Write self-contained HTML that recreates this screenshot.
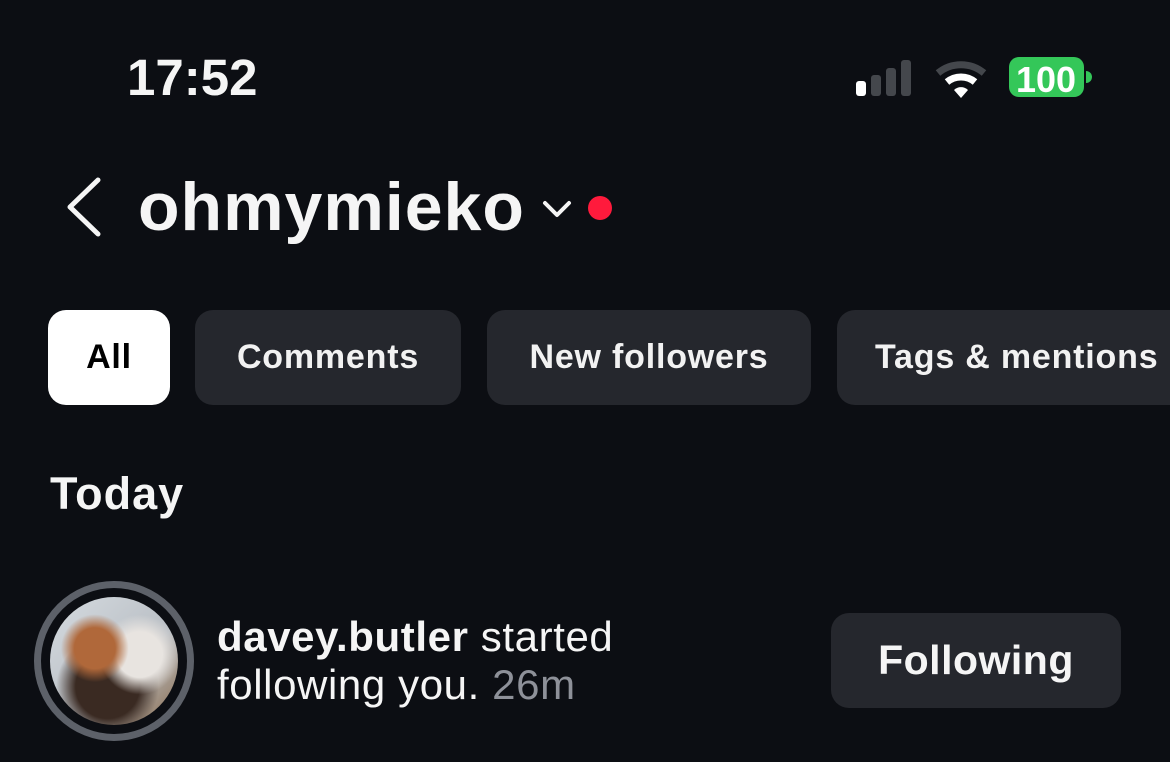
<!DOCTYPE html>
<html><head><style>
body{margin:0;width:1170px;height:762px;background:#0c0e13;font-family:"Liberation Sans",sans-serif;color:#f5f5f5;position:relative;overflow:hidden}
.a{position:absolute}
.chip{position:absolute;top:310px;height:95px;border-radius:18px;background:#25272d;font-size:34px;letter-spacing:0.8px;font-weight:bold;display:flex;align-items:center;justify-content:center;white-space:nowrap;color:#f2f2f2}
</style></head><body>
<div class="a" style="left:127px;top:48px;font-size:51px;font-weight:bold">17:52</div>
<svg class="a" style="left:850px;top:55px" width="250" height="50">
<rect x="6" y="26" width="10" height="15" rx="3" fill="#fff"/>
<rect x="21" y="20" width="10" height="21" rx="3" fill="#44474c"/>
<rect x="36" y="13" width="10" height="28" rx="3" fill="#44474c"/>
<rect x="51" y="5" width="10" height="36" rx="3" fill="#44474c"/>
<path d="M88 18 A36 36 0 0 1 134 18" stroke="#44474c" stroke-width="7" fill="none"/>
<path d="M97 27 A22 22 0 0 1 125 27" stroke="#fff" stroke-width="7" fill="none"/>
<path d="M104 35 L111 43 L118 35 A10 10 0 0 0 104 35Z" fill="#fff"/>
<rect x="159" y="2" width="75" height="40" rx="10" fill="#34c759"/>
<path d="M236 16 a6 6 0 0 1 0 12z" fill="#34c759"/>
<text x="196" y="37" font-size="36" font-weight="bold" fill="#fff" text-anchor="middle" font-family="Liberation Sans">100</text>
</svg>
<svg class="a" style="left:60px;top:175px" width="50" height="65"><path d="M38 5 L10 32 L38 59" stroke="#f5f5f5" stroke-width="5" fill="none" stroke-linecap="round" stroke-linejoin="round"/></svg>
<div class="a" style="left:138px;top:168px;font-size:68px;font-weight:bold;letter-spacing:1px">ohmymieko</div>
<svg class="a" style="left:540px;top:195px" width="40" height="30"><path d="M5 8 L17 20 L29 8" stroke="#f5f5f5" stroke-width="4" fill="none" stroke-linecap="round" stroke-linejoin="round"/></svg>
<div class="a" style="left:588px;top:196px;width:24px;height:24px;border-radius:50%;background:#ff1a3c"></div>
<div class="chip" style="left:48px;width:122px;background:#fff;color:#000">All</div>
<div class="chip" style="left:195px;width:266px">Comments</div>
<div class="chip" style="left:487px;width:324px">New followers</div>
<div class="chip" style="left:837px;width:360px;justify-content:flex-start;padding-left:38px;box-sizing:border-box">Tags &amp; mentions</div>
<div class="a" style="left:50px;top:468px;font-size:45px;font-weight:bold;letter-spacing:1px">Today</div>
<div class="a" style="left:34px;top:581px;width:160px;height:160px;border-radius:50%;border:7px solid #5d6169;box-sizing:border-box"></div>
<div class="a" style="left:50px;top:597px;width:128px;height:128px;border-radius:50%;overflow:hidden;background:radial-gradient(circle at 35% 40%,#b0683a 0 18%,transparent 30%),radial-gradient(circle at 70% 45%,#e8e4e0 0 20%,transparent 35%),radial-gradient(circle at 45% 70%,#3a2a22 0 28%,transparent 45%),linear-gradient(135deg,#d5dbe0,#b9bec4 60%,#8a6a4a)"></div>
<div class="a" style="left:217px;top:613px;font-size:42px;letter-spacing:0.6px;line-height:48px;color:#f5f5f5;white-space:nowrap"><b>davey.butler</b> started<br>following you. <span style="color:#8e9199">26m</span></div>
<div class="a" style="left:831px;top:613px;width:290px;height:95px;border-radius:18px;background:#25272d;font-size:41px;letter-spacing:0.5px;font-weight:bold;display:flex;align-items:center;justify-content:center">Following</div>
</body></html>
